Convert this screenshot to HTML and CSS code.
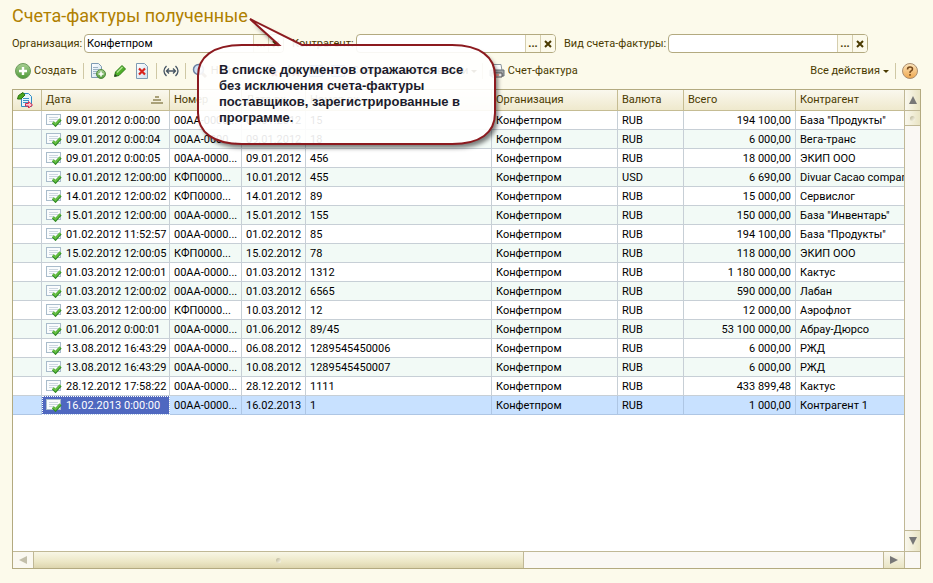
FILE: index.html
```
<!DOCTYPE html>
<html lang="ru">
<head>
<meta charset="utf-8">
<title>Счета-фактуры полученные</title>
<link rel="stylesheet" href="styles.css">
</head>
<body>
<svg class="defs" aria-hidden="true">
  <defs>
    <linearGradient id="gGreen" x1="0" y1="0" x2="0" y2="1"><stop offset="0" stop-color="#a9cf94"/><stop offset="1" stop-color="#4f9a38"/></linearGradient>
    <linearGradient id="gOrange" x1="0" y1="0" x2="0" y2="1"><stop offset="0" stop-color="#fde6bd"/><stop offset="1" stop-color="#eda64e"/></linearGradient>
    <linearGradient id="gPage" x1="0" y1="0" x2="1" y2="1"><stop offset="0" stop-color="#ffffff"/><stop offset="1" stop-color="#cfe0ee"/></linearGradient>
    <symbol id="doc" viewBox="0 0 16 14">
      <rect x=".5" y="1.5" width="14" height="10" fill="#fafcfd" stroke="#a9bccb"/>
      <path d="M3 4.5h9M3 6.500h9M3 8.500h5" stroke="#ccd6df"/>
      <path d="M7 9.500l2.500 2.500 5-5.500" fill="none" stroke="#2f8a22" stroke-width="3"/>
      <path d="M7 9l2.500 2.300 5-5.300" fill="none" stroke="#66c043" stroke-width="1.800"/>
    </symbol>
    <symbol id="cross" viewBox="0 0 8 8"><path d="M1 1l6 6M7 1l-6 6" stroke="#4a3a00" stroke-width="2"/></symbol>
  </defs>
</svg>
<main class="page">
  <h1 class="title">Счета-фактуры полученные</h1>
  <form class="filters">
    <label class="l-org" for="org">Организация:</label>
    <span class="field"><input id="org" value="Конфетпром"><button type="button" aria-label="Выбрать">...</button><button type="button" aria-label="Очистить"><svg><use href="#cross"/></svg></button></span>
    <label class="l-partner" for="partner">Контрагент:</label>
    <span class="field"><input id="partner"><button type="button" aria-label="Выбрать">...</button><button type="button" aria-label="Очистить"><svg><use href="#cross"/></svg></button></span>
    <label class="l-kind" for="kind">Вид счета-фактуры:</label>
    <span class="field"><input id="kind"><button type="button" aria-label="Выбрать">...</button><button type="button" aria-label="Очистить"><svg><use href="#cross"/></svg></button></span>
  </form>
  <div class="toolbar">
    <button type="button"><svg viewBox="0 0 16 16"><circle cx="8" cy="8" r="7.500" fill="url(#gGreen)" stroke="#6d9c5d"/><path d="M8 4v8M4 8h8" stroke="#fff" stroke-width="2.400"/></svg>Создать</button>
    <i class="sep"></i>
    <button type="button" aria-label="Скопировать"><svg viewBox="0 0 16 16"><path d="M1.500.5h7l3 3v11h-10z" fill="url(#gPage)" stroke="#7e9bb3"/><path d="M3 4.500h5M3 6.500h6M3 8.500h5M3 10.500h4" stroke="#9db3c5"/><circle cx="11" cy="11" r="4.500" fill="url(#gGreen)" stroke="#548c42"/><path d="M11 8.500v5M8.500 11h5" stroke="#fff" stroke-width="1.600"/></svg></button>
    <button type="button" aria-label="Изменить"><svg viewBox="0 0 16 16"><path d="M2.500 13.500l1-4.500 6.500-6.500 3.500 3.500-6.500 6.500z" fill="#4fb02a" stroke="#2c7d17"/><path d="M5 9.500l5.500-5.500" stroke="#b4e493" stroke-width="1.500"/><path d="M2.500 13.500l.5-2.500 2.300 2z" fill="#333"/></svg></button>
    <button type="button" aria-label="Удалить"><svg viewBox="0 0 16 16"><path d="M2.500.5h8l3 3v12h-11z" fill="url(#gPage)" stroke="#7e9bb3"/><path d="M5 5.500l6 6M11 5.500l-6 6" stroke="#d8231c" stroke-width="2.200"/></svg></button>
    <i class="sep"></i>
    <button type="button" aria-label="Интервал"><svg viewBox="0 0 16 16" fill="none" stroke="#475665" stroke-width="1.300"><path d="M3.500 3Q-1.500 8 3.500 13M12.500 3q5 5 0 10M3.500 8h9M6 5.500L3.500 8 6 10.500M10 5.500L12.500 8 10 10.500"/></svg></button>
    <i class="sep"></i>
    <button type="button" class="find"><svg viewBox="0 0 16 16"><path d="M9 9l5 5" stroke="#967b55" stroke-width="3"/><circle cx="6.500" cy="6.500" r="5" fill="#cfe2f6" stroke="#6b7fa0" stroke-width="1.500"/></svg>Найти...</button>
    <button type="button" aria-label="Отменить поиск"><svg viewBox="0 0 16 16"><circle cx="6" cy="6" r="4" fill="#cfe2f6" stroke="#6b7fa0"/><path d="M8 8l5 5M13 8l-5 5" stroke="#d8231c" stroke-width="2"/></svg></button>
    <button type="button" aria-label="Проводки"><svg viewBox="0 0 16 16"><path d="M3 2v11M3 8l5-5" stroke="#2a9a42" stroke-width="2"/><path d="M7 13l5-9M8 7l5 6" stroke="#d8231c" stroke-width="2"/></svg></button>
    <button type="button" aria-label="Реестр"><svg viewBox="0 0 16 16"><path d="M1.500 2.500h13v11h-13z" fill="#cfe2f6" stroke="#3f79b8"/><path d="M4 6h8M4 9h8" stroke="#3f79b8"/></svg></button>
    <button type="button" aria-label="Список"><svg viewBox="0 0 16 16"><path d="M1.500 2.500h13v11h-13z" fill="#cfe2f6" stroke="#3f79b8"/><path d="M4 6h8M4 9h8" stroke="#3f79b8"/></svg></button>
    <button type="button" class="based">Создать на основании <b class="caret"></b></button>
    <i class="sep"></i>
    <button type="button"><svg viewBox="0 0 16 16"><path d="M4 1.500h8l1 6H3z" fill="#fff" stroke="#8c969e"/><path d="M1 7h14v6H1z" fill="#a3a6a8" stroke="#687077"/><path d="M3 10h10v4H3z" fill="#eee" stroke="#555"/><path d="M4 12h6" stroke="#d8462c"/></svg>Счет-фактура</button>
    <button type="button" class="all">Все действия <b class="caret"></b></button>
    <i class="sep"></i>
    <button type="button" aria-label="Справка"><svg viewBox="0 0 16 16"><circle cx="8" cy="8" r="7.500" fill="url(#gOrange)" stroke="#a98e72"/><path d="M5.500 6.500Q5.500 4 8 4t2.500 2Q10.500 7.500 8.700 8.200 8 8.500 8 10M8 11v1.700" fill="none" stroke="#75481b" stroke-width="1.500"/></svg></button>
  </div>
  <section class="frame">
    <div class="view">
      <table>
        <colgroup><col class="c-mark"><col class="c-date"><col class="c-num"><col class="c-in"><col class="c-innum"><col class="c-org"><col class="c-cur"><col class="c-sum"><col></colgroup>
        <thead><tr>
          <th><svg class="swap" viewBox="0 0 16 16"><path d="M4.500 1.500h7l3 3v10h-10z" fill="#e7f5fc" stroke="#2f8cc4"/><path d="M6 6.500h6M6 8.500h6M6 10.500h5" stroke="#3f94c4"/><path d="M.5 7l1-3.500L6 .5l2 2.500-4 4z" fill="#4aa51e" stroke="#2a700f"/><path d="M8.500 11.500h3v-2l4 3.500-4 3v-2h-3z" fill="#ffc6cd" stroke="#d42b50"/></svg></th>
          <th><span class="sorted">Дата<svg viewBox="0 0 12 8"><path d="M4 1h4M2 4h8M0 7h12" stroke="#aaa178" stroke-width="2"/></svg></span></th>
          <th>Номер</th><th>Дата вх.</th><th>Номер вх.</th><th>Организация</th><th>Валюта</th><th>Всего</th><th>Контрагент</th>
        </tr></thead>
        <tbody id="rows"></tbody>
      </table>
    </div>
    <div class="vbar"><button type="button" aria-label="Вверх"><svg viewBox="0 0 8 8"><path d="M4 0l4 8H0z"/></svg></button><span class="thumb"><i class="grip"></i></span><button type="button" class="last" aria-label="Вниз"><svg viewBox="0 0 8 8"><path d="M4 8l4-8H0z"/></svg></button></div>
    <div class="hbar"><button type="button" class="off" aria-label="Влево"><svg viewBox="0 0 8 8"><path d="M0 4l8-4v8z"/></svg></button><span class="thumb"><i class="grip"></i></span><button type="button" class="last" aria-label="Вправо"><svg viewBox="0 0 8 8"><path d="M8 4L0 0v8z"/></svg></button></div>
    <div class="corner"></div>
  </section>
</main>
<aside class="callout">
  <svg viewBox="0 0 320 145" aria-hidden="true">
    <defs>
      <path id="bubble" d="M60 9L112 35H262C290 35 305 47 305 66V103C305 123 290 134 262 134H52C23 134 8 122 8 103V66C8 47 23 35 52 35H89Z"/>
      <mask id="outside"><rect width="320" height="145" fill="#fff"/><use href="#bubble" fill="#000"/></mask>
    </defs>
    <g mask="url(#outside)"><use class="shade" href="#bubble" x="3" y="4"/></g>
    <use class="body" href="#bubble"/>
  </svg>
  <p>В списке документов отражаются все без исключения счета-фактуры поставщиков, зарегистрированные в программе.</p>
</aside>
<script src="rows.js"></script>
</body>
</html>
```

FILE: styles.css
```
* { box-sizing: border-box; }
body {
  margin: 0;
  background: #fcfaeb;
  color: #000;
  font: 11px/16px Roboto, "Liberation Sans", sans-serif;
}
.defs { position: absolute; width: 0; height: 0; }
.page {
  display: flex;
  flex-direction: column;
  min-height: 100vh;
  padding: 4px 12px 14px;
}
.title {
  margin: 0 0 6px;
  color: #b08000;
  font-size: 18px;
  line-height: 24px;
  font-weight: 400;
}
button {
  display: flex;
  align-items: center;
  gap: 3px;
  padding: 0;
  border: 0;
  background: none;
  color: #4a3a00;
  font: inherit;
  white-space: nowrap;
}

.filters { display: flex; align-items: center; color: #4a3a00; }
.filters label { flex: none; white-space: nowrap; }
.l-org { width: 72px; }
.l-partner { width: 64px; }
.l-kind { width: 104px; }
.field {
  display: flex;
  flex: none;
  width: 200px;
  height: 19px;
  margin-right: 8px;
  border: 1px solid #b3aa80;
  border-radius: 4px;
  background: #fff;
  overflow: hidden;
}
.field input {
  flex: 1;
  min-width: 0;
  padding: 0 2px;
  border: 0;
  background: none;
  font: inherit;
  outline: 0;
}
.field button {
  justify-content: center;
  width: 15px;
  border-left: 1px solid #d5ceae;
  background: #fcfaeb;
  font-weight: 700;
}
.field svg { width: 8px; height: 8px; }

.toolbar {
  display: flex;
  align-items: center;
  gap: 6px;
  height: 36px;
  padding: 0 3px;
}
.toolbar button { flex: none; }
.toolbar svg { width: 16px; height: 16px; }
.sep { flex: none; width: 1px; height: 16px; background: #cfc8a5; }
.find { width: 66px; }
.based { width: 124px; }
.caret { border: 3px solid transparent; border-top-color: #4a3a00; border-bottom: 0; }
.all { margin-left: auto; }

.frame {
  flex: 1;
  display: grid;
  grid-template: minmax(0, 1fr) 17px / minmax(0, 1fr) 16px;
  border: 1px solid #b3aa80;
  background: #fff;
}
.view { overflow: hidden; }
table { width: 100%; table-layout: fixed; border-collapse: separate; border-spacing: 0; }
.c-mark { width: 29px; }
.c-date { width: 128px; }
.c-num { width: 72px; }
.c-in { width: 64px; }
.c-innum { width: 186px; }
.c-org { width: 126px; }
.c-cur { width: 66px; }
.c-sum { width: 112px; }
th, td {
  padding: 0 4px;
  overflow: hidden;
  border-right: 1px solid #c7cfd6;
  border-bottom: 1px solid #c7cfd6;
  white-space: nowrap;
  text-align: left;
  font-weight: 400;
}
th:last-child, td:last-child { border-right: 0; }
th {
  height: 21px;
  background: linear-gradient(#faf8ee, #efe9cd);
  border-color: #c5bc93;
  color: #4a3a00;
}
td { height: 19px; padding-top: 2px; line-height: 16px; }
.sum { text-align: right; }
tbody tr:nth-child(even) { background: #f2faf6; }
tbody tr:last-child { background: #c8e1ff; }
tbody tr:last-child td { border-color: #aec6e4; }
tbody tr:last-child td:nth-child(2) {
  background: #4f68c0;
  color: #fff;
  outline: 1px dotted #fff;
  outline-offset: -1px;
}
.swap { display: block; width: 16px; height: 16px; }
.sorted { display: flex; align-items: center; justify-content: space-between; padding-right: 2px; }
.sorted svg { width: 12px; height: 8px; }
.doc { width: 16px; height: 14px; margin-right: 4px; vertical-align: top; }

.vbar, .hbar { display: flex; background: #faf8f4; }
.vbar { flex-direction: column; border-left: 1px solid #c0b896; }
.hbar { border-top: 1px solid #c0b896; }
.vbar button, .hbar button { flex: none; justify-content: center; }
.vbar button, .vbar .thumb {
  border-bottom: 1px solid #c0b896;
  background: linear-gradient(90deg, #faf8ee, #e9e4c4);
}
.hbar button, .hbar .thumb {
  border-right: 1px solid #c0b896;
  background: linear-gradient(#faf8ee, #e9e4c4);
}
.vbar button { height: 21px; }
.hbar button { width: 21px; }
.vbar .last { margin-top: auto; border-bottom: 0; border-top: 1px solid #c0b896; }
.hbar .last { margin-left: auto; border-right: 0; border-left: 1px solid #c0b896; }
.vbar svg, .hbar svg { width: 8px; height: 8px; fill: #777; }
.hbar .off { background: #faf8f0; }
.hbar .off svg { fill: #c3bfaa; }
.thumb { display: flex; align-items: center; justify-content: center; }
.vbar .thumb { height: 15px; }
.hbar .thumb { width: 55%; background: linear-gradient(#f8f6e6, #ece7c6 60%, #ddd5ae); }
.grip { width: 5px; height: 5px; border-radius: 3px; background: linear-gradient(135deg, #b5b092, #fffdf0); }
.corner { border-top: 1px solid #c0b896; border-left: 1px solid #c0b896; background: #faf8f4; }

.callout { position: absolute; left: 190px; top: 10px; width: 320px; }
.callout svg { display: block; width: 320px; height: 145px; }
.shade { fill: #000; fill-opacity: .5; filter: blur(2px); }
.body { fill: #fff; fill-opacity: .9; stroke: #8c1a1f; stroke-width: 2; }
.callout p {
  position: absolute;
  left: 29px;
  top: 52px;
  width: 262px;
  margin: 0;
  color: #1c1c2c;
  font: bold 13px/16px "Liberation Sans", sans-serif;
}
```

FILE: rows.js
```
const rows = [
  ["09.01.2012 0:00:00", "00АА-0000...", "09.01.2012", "15", "RUB", "194 100,00", "База \"Продукты\""],
  ["09.01.2012 0:00:04", "00АА-0000...", "09.01.2012", "18", "RUB", "6 000,00", "Вега-транс"],
  ["09.01.2012 0:00:05", "00АА-0000...", "09.01.2012", "456", "RUB", "18 000,00", "ЭКИП ООО"],
  ["10.01.2012 12:00:00", "КФП0000...", "10.01.2012", "455", "USD", "6 690,00", "Divuar Cacao company"],
  ["14.01.2012 12:00:02", "КФП0000...", "14.01.2012", "89", "RUB", "15 000,00", "Сервислог"],
  ["15.01.2012 12:00:00", "00АА-0000...", "15.01.2012", "155", "RUB", "150 000,00", "База \"Инвентарь\""],
  ["01.02.2012 11:52:57", "00АА-0000...", "01.02.2012", "85", "RUB", "194 100,00", "База \"Продукты\""],
  ["15.02.2012 12:00:05", "КФП0000...", "15.02.2012", "78", "RUB", "118 000,00", "ЭКИП ООО"],
  ["01.03.2012 12:00:01", "00АА-0000...", "01.03.2012", "1312", "RUB", "1 180 000,00", "Кактус"],
  ["01.03.2012 12:00:02", "00АА-0000...", "01.03.2012", "6565", "RUB", "590 000,00", "Лабан"],
  ["23.03.2012 12:00:00", "КФП0000...", "10.03.2012", "12", "RUB", "12 000,00", "Аэрофлот"],
  ["01.06.2012 0:00:01", "00АА-0000...", "01.06.2012", "89/45", "RUB", "53 100 000,00", "Абрау-Дюрсо"],
  ["13.08.2012 16:43:29", "00АА-0000...", "06.08.2012", "1289545450006", "RUB", "6 000,00", "РЖД"],
  ["13.08.2012 16:43:29", "00АА-0000...", "10.08.2012", "1289545450007", "RUB", "6 000,00", "РЖД"],
  ["28.12.2012 17:58:22", "00АА-0000...", "28.12.2012", "1111", "RUB", "433 899,48", "Кактус"],
  ["16.02.2013 0:00:00", "00АА-0000...", "16.02.2013", "1", "RUB", "1 000,00", "Контрагент 1"]
];
const icon = '<svg class="doc"><use href="#doc"/></svg>';
document.getElementById("rows").innerHTML = rows.map(r =>
  `<tr><td></td><td>${icon}${r[0]}</td><td>${r[1]}</td><td>${r[2]}</td><td>${r[3]}</td><td>Конфетпром</td><td>${r[4]}</td><td class="sum">${r[5]}</td><td>${r[6]}</td></tr>`
).join("");
```
